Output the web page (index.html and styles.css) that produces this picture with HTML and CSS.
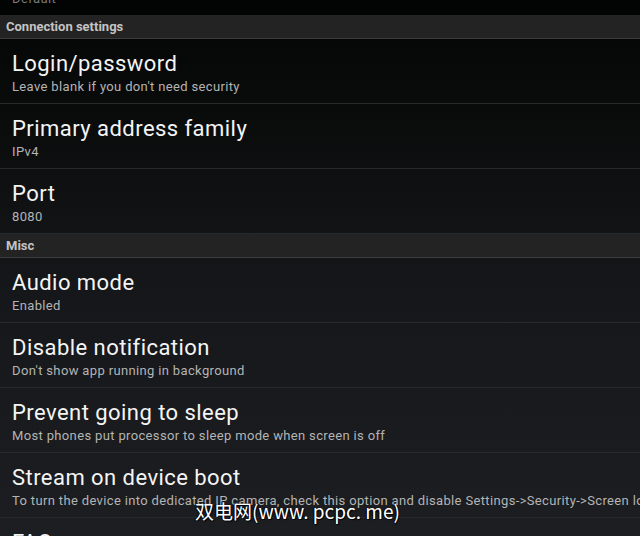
FILE: index.html
```html
<!DOCTYPE html>
<html lang="en">
<head>
    <meta charset="UTF-8">
    <meta name="viewport" content="width=device-width, initial-scale=1.0">
    <title>Settings</title>
    <link rel="stylesheet" href="styles.css">
</head>
<body>
    <div class="screen">
        <div class="cut-row">
            <div class="summary">Default</div>
        </div>

        <div class="category">Connection settings</div>
        <div class="pref">
            <div class="title">Login/password</div>
            <div class="summary">Leave blank if you don't need security</div>
        </div>
        <div class="pref">
            <div class="title">Primary address family</div>
            <div class="summary">IPv4</div>
        </div>
        <div class="pref">
            <div class="title">Port</div>
            <div class="summary">8080</div>
        </div>

        <div class="category">Misc</div>
        <div class="pref">
            <div class="title">Audio mode</div>
            <div class="summary">Enabled</div>
        </div>
        <div class="pref">
            <div class="title">Disable notification</div>
            <div class="summary">Don't show app running in background</div>
        </div>
        <div class="pref">
            <div class="title">Prevent going to sleep</div>
            <div class="summary">Most phones put processor to sleep mode when screen is off</div>
        </div>
        <div class="pref">
            <div class="title">Stream on device boot</div>
            <div class="summary">To turn the device into dedicated IP camera, check this option and disable Settings-&gt;Security-&gt;Screen lock</div>
        </div>
        <div class="pref">
            <div class="title">FAQ</div>
            <div class="summary">Frequently asked questions</div>
        </div>

        <div class="watermark">双电网(www. pcpc. me)</div>
    </div>
</body>
</html>
```

FILE: styles.css
```css
html, body{margin:0; padding:0; background:#000;}

.screen{position:relative; width:640px; height:536px; overflow:hidden;
    background:linear-gradient(#040505 0%, #0b0d0d 25%, #15171a 55%, #1c1e21 100%);
    font-family:Roboto, "Noto Sans", sans-serif; color:#f2f2f2;}

.cut-row{height:15px; overflow:hidden; background:#020303; padding-left:12px;}
.cut-row .summary{margin-top:-9px; color:#7a7a7a;}

.category{height:23px; line-height:23px; padding-left:6px; background:#232323;
    border-bottom:1px solid #3c3c3c; font-size:13px; font-weight:bold; color:#c4c4c4;}

.pref{height:65px; box-sizing:border-box; padding:12px 0 0 12px; border-bottom:1px solid #272a2c;
    white-space:nowrap; overflow:hidden;}

.title{font-size:22px; line-height:26px; letter-spacing:0.45px; color:#f4f4f4;}
.summary{font-size:13px; line-height:16px; margin-top:2px; letter-spacing:0.35px; color:#b4b4b4;}

.watermark{position:absolute; left:195px; top:499px; font-family:"Noto Sans CJK SC", sans-serif;
    font-size:19px; line-height:24px; color:#fff; text-shadow:1px 1px 1px #000, -1px 0 1px #000;}
```
